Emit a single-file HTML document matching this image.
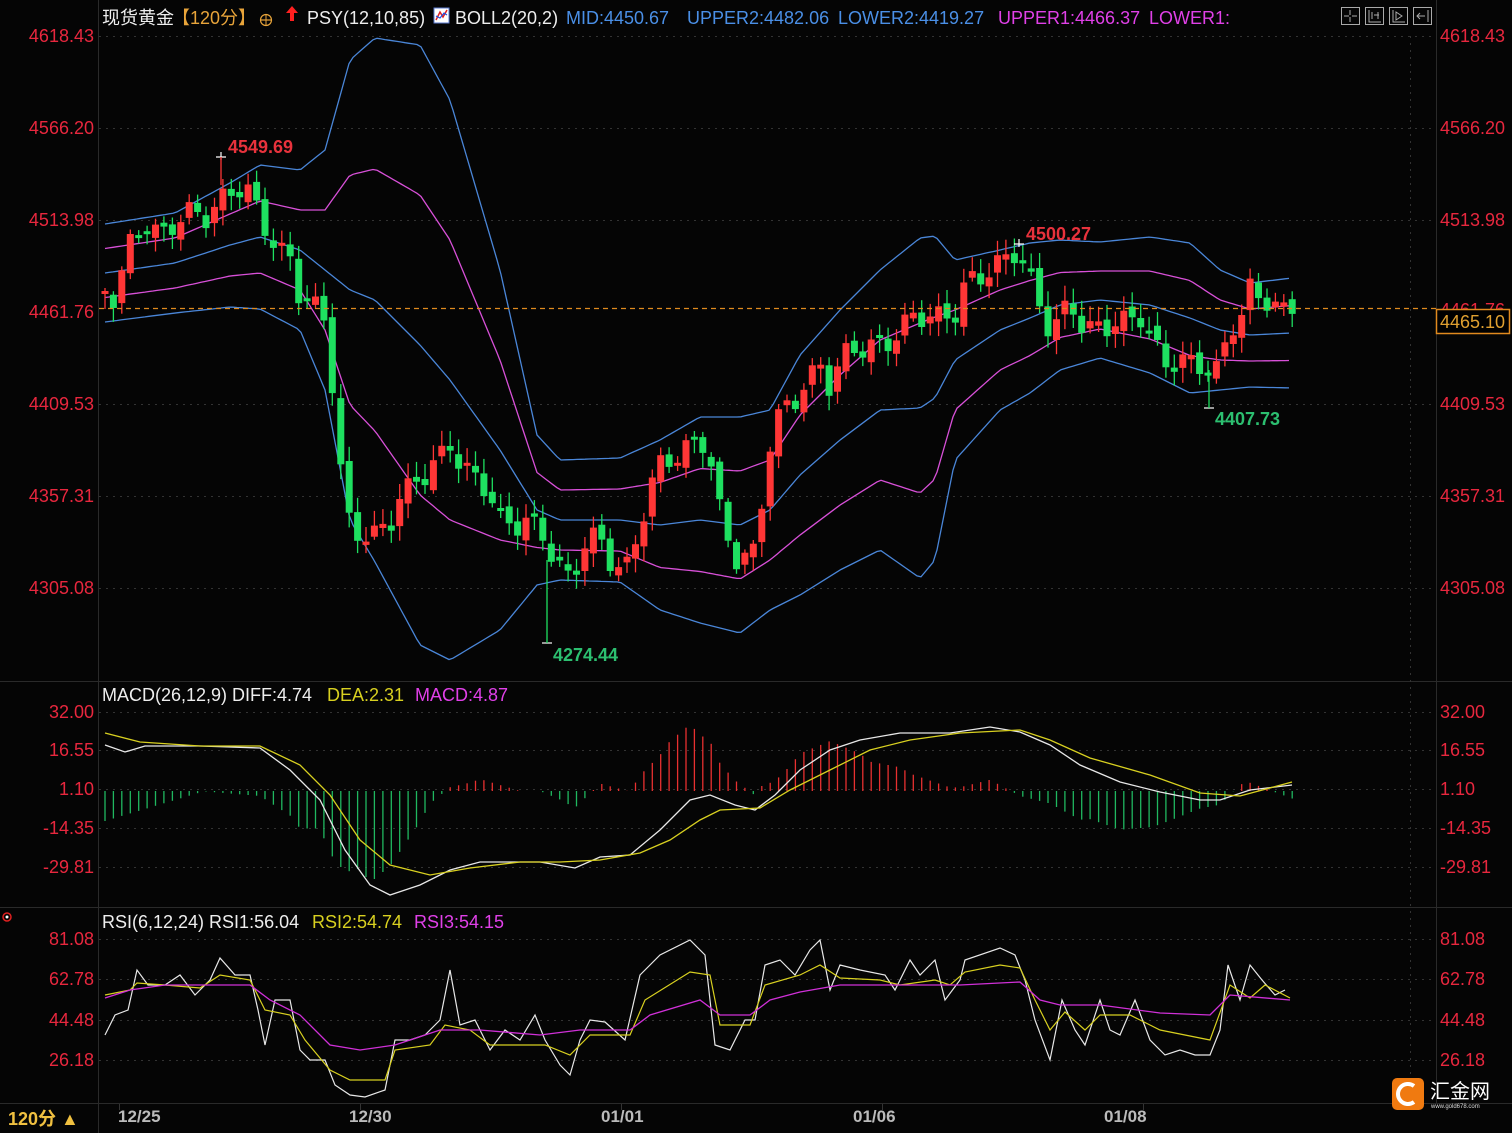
<!DOCTYPE html>
<html><head><meta charset="utf-8">
<style>
html,body{margin:0;padding:0;background:#000;}
body{width:1512px;height:1133px;overflow:hidden;position:relative;font-family:"Liberation Sans","Noto Sans CJK SC",sans-serif;}
svg{position:absolute;left:0;top:0;}
svg text{font-family:"Liberation Sans","Noto Sans CJK SC",sans-serif;}
</style></head><body>
<svg id="s" width="1512" height="1133" viewBox="0 0 1512 1133" xmlns="http://www.w3.org/2000/svg">
<rect width="1512" height="1133" fill="#050505"/>
<g stroke="#2a2a2a" stroke-width="1">
<line x1="98.5" y1="0" x2="98.5" y2="1133"/>
<line x1="1436.5" y1="0" x2="1436.5" y2="1103"/>
<line x1="0" y1="681.5" x2="1512" y2="681.5"/>
<line x1="0" y1="907.5" x2="1512" y2="907.5"/>
<line x1="0" y1="1103.5" x2="1512" y2="1103.5"/>
</g>
<g stroke="#333" stroke-width="1" stroke-dasharray="2,5">
<line x1="99" y1="36.5" x2="1436" y2="36.5"/>
<line x1="99" y1="128.5" x2="1436" y2="128.5"/>
<line x1="99" y1="220.5" x2="1436" y2="220.5"/>
<line x1="99" y1="404.5" x2="1436" y2="404.5"/>
<line x1="99" y1="496.5" x2="1436" y2="496.5"/>
<line x1="99" y1="588.5" x2="1436" y2="588.5"/>
<line x1="99" y1="712.5" x2="1436" y2="712.5"/>
<line x1="99" y1="750.5" x2="1436" y2="750.5"/>
<line x1="99" y1="789.5" x2="1436" y2="789.5"/>
<line x1="99" y1="828.5" x2="1436" y2="828.5"/>
<line x1="99" y1="867.5" x2="1436" y2="867.5"/>
<line x1="99" y1="939.5" x2="1436" y2="939.5"/>
<line x1="99" y1="979.5" x2="1436" y2="979.5"/>
<line x1="99" y1="1020.5" x2="1436" y2="1020.5"/>
<line x1="99" y1="1060.5" x2="1436" y2="1060.5"/>
<line x1="1410.5" y1="36" x2="1410.5" y2="1100"/>
</g>
<g id="dyn"></g>
<line x1="99" y1="308.5" x2="1436" y2="308.5" stroke="#e08a1e" stroke-width="1.2" stroke-dasharray="5,4"/>
<g fill="#e8273e" font-size="18" text-anchor="end">
<text x="94" y="42">4618.43</text>
<text x="94" y="134">4566.20</text>
<text x="94" y="226">4513.98</text>
<text x="94" y="318">4461.76</text>
<text x="94" y="410">4409.53</text>
<text x="94" y="502">4357.31</text>
<text x="94" y="594">4305.08</text>
<text x="94" y="718">32.00</text>
<text x="94" y="756">16.55</text>
<text x="94" y="795">1.10</text>
<text x="94" y="834">-14.35</text>
<text x="94" y="873">-29.81</text>
<text x="94" y="945">81.08</text>
<text x="94" y="985">62.78</text>
<text x="94" y="1026">44.48</text>
<text x="94" y="1066">26.18</text>
</g>
<g fill="#e8273e" font-size="18">
<text x="1440" y="42">4618.43</text>
<text x="1440" y="134">4566.20</text>
<text x="1440" y="226">4513.98</text>
<text x="1440" y="316">4461.76</text>
<text x="1440" y="410">4409.53</text>
<text x="1440" y="502">4357.31</text>
<text x="1440" y="594">4305.08</text>
<text x="1440" y="718">32.00</text>
<text x="1440" y="756">16.55</text>
<text x="1440" y="795">1.10</text>
<text x="1440" y="834">-14.35</text>
<text x="1440" y="873">-29.81</text>
<text x="1440" y="945">81.08</text>
<text x="1440" y="985">62.78</text>
<text x="1440" y="1026">44.48</text>
<text x="1440" y="1066">26.18</text>
</g>
<rect x="1436.5" y="309.5" width="73" height="24" fill="#000" stroke="#e08a1e" stroke-width="1.5"/>
<text x="1440" y="328" fill="#e0a030" font-size="18">4465.10</text>
<g font-size="18">
<text x="102" y="24" fill="#eee">现货黄金</text>
<text x="172" y="24" fill="#e8a43a">【120分】</text>
<circle cx="266" cy="20" r="5.5" fill="none" stroke="#e8a43a" stroke-width="1.2"/>
<line x1="260" y1="20" x2="272" y2="20" stroke="#e8a43a" stroke-width="1.2"/>
<line x1="266" y1="14" x2="266" y2="26" stroke="#e8a43a" stroke-width="1"/>
<path d="M292 6 L286 13 L290 13 L290 21 L294 21 L294 13 L298 13 Z" fill="#ff2020"/>
<text x="307" y="24" fill="#eee">PSY(12,10,85)</text>
<rect x="434" y="8" width="15" height="15" fill="#fff" stroke="#5a7ad0"/>
<path d="M436 20 L440 12 L443 17 L447 10" stroke="#e02020" fill="none" stroke-width="1.5"/>
<path d="M436 16 L440 18 L444 13 L447 15" stroke="#2050e0" fill="none" stroke-width="1.2"/>
<text x="455" y="24" fill="#eee">BOLL2(20,2)</text>
<text x="566" y="24" fill="#4a8fe6">MID:4450.67</text>
<text x="687" y="24" fill="#4a8fe6">UPPER2:4482.06</text>
<text x="838" y="24" fill="#4a8fe6">LOWER2:4419.27</text>
<text x="998" y="24" fill="#e040e8">UPPER1:4466.37</text>
<text x="1149" y="24" fill="#e040e8">LOWER1:</text>
</g>
<g stroke="#aaa" fill="none" stroke-width="1">
<rect x="1341.5" y="7.5" width="18" height="17"/>
<rect x="1365.5" y="7.5" width="18" height="17"/>
<rect x="1389.5" y="7.5" width="18" height="17"/>
<rect x="1413.5" y="7.5" width="18" height="17"/>
<path d="M1350 10v5M1350 17v5M1344 16h5M1352 16h5"/>
<path d="M1369 10v12h12M1372 12v7M1374 15h5M1378 12v7"/>
<path d="M1393 10v12h12M1396 12v8l6-4z"/>
<path d="M1428 10v12M1417 16h8M1420 13l-3 3 3 3"/>
</g>
<g font-size="18" font-weight="bold">
<text x="228" y="153" fill="#e8323c">4549.69</text>
<text x="1026" y="240" fill="#e8323c">4500.27</text>
<text x="553" y="661" fill="#2cbf70">4274.44</text>
<text x="1215" y="425" fill="#2cbf70">4407.73</text>
</g>
<g stroke="#fff" stroke-width="1.2">
<path d="M216 157h10M221 152v8"/><path d="M1014 244h10M1019 239v8"/>
<path d="M542 643h10"/><path d="M1204 408h10"/>
</g>
<line x1="547" y1="560" x2="547" y2="643" stroke="#1ee060" stroke-width="1.3"/>
<line x1="1209" y1="370" x2="1209" y2="408" stroke="#1ee060" stroke-width="1.3"/>
<line x1="221" y1="157" x2="221" y2="185" stroke="#ff3636" stroke-width="1.3"/>
<g font-size="18">
<text x="102" y="701" fill="#eee">MACD(26,12,9) DIFF:4.74</text>
<text x="327" y="701" fill="#d8d020">DEA:2.31</text>
<text x="415" y="701" fill="#e040e8">MACD:4.87</text>
<text x="102" y="928" fill="#eee">RSI(6,12,24) RSI1:56.04</text>
<text x="312" y="928" fill="#d8d020">RSI2:54.74</text>
<text x="414" y="928" fill="#e040e8">RSI3:54.15</text>
</g>
<circle cx="7" cy="917" r="4" fill="none" stroke="#e02020" stroke-width="1.5"/><circle cx="7" cy="917" r="1.5" fill="#fff"/>
<g font-size="17" fill="#bbb" font-weight="bold">
<text x="118" y="1122">12/25</text>
<text x="349" y="1122">12/30</text>
<text x="601" y="1122">01/01</text>
<text x="853" y="1122">01/06</text>
<text x="1104" y="1122">01/08</text>
</g>
<g stroke="#333"><line x1="119.5" y1="1104" x2="119.5" y2="1110"/><line x1="360.5" y1="1104" x2="360.5" y2="1110"/><line x1="621.5" y1="1104" x2="621.5" y2="1110"/><line x1="882.5" y1="1104" x2="882.5" y2="1110"/><line x1="1143.5" y1="1104" x2="1143.5" y2="1110"/></g>
<text x="8" y="1125" font-size="18" fill="#f0c040" font-weight="bold">120分 ▲</text>
<rect x="1392" y="1078" width="32" height="32" rx="5" fill="#f07a10"/>
<path d="M1414 1086 A10 10 0 1 0 1414 1102" stroke="#fff" stroke-width="4" fill="none"/>
<text x="1430" y="1098" font-size="20" fill="#fff">汇金网</text>
<text x="1431" y="1108" font-size="6" fill="#ddd">www.gold678.com</text>
</svg>
<script>
(function(){
var NS="http://www.w3.org/2000/svg",g=document.getElementById('dyn');
function el(t,a){var e=document.createElementNS(NS,t);for(var k in a)e.setAttribute(k,a[k]);g.appendChild(e);return e;}
function interp(pts,x){if(x<=pts[0][0])return pts[0][1];for(var i=1;i<pts.length;i++){if(x<=pts[i][0]){var a=pts[i-1],b=pts[i];return a[1]+(b[1]-a[1])*(x-a[0])/(b[0]-a[0]);}}return pts[pts.length-1][1];}
function pl(pts,c,w){el('polyline',{points:pts.map(function(p){return p.join(',')}).join(' '),fill:'none',stroke:c,'stroke-width':w||1.3});}
var B=[[105,273,49],[175,263,50],[230,245,62],[260,237,72],[300,250,80],[325,270,120],[350,290,230],[375,300,262],[420,345,300],[450,380,280],[500,450,180],[537,510,75],[560,520,60],[620,520,62],[660,525,85],[700,520,103],[740,525,108],[770,510,100],[800,475,120],[840,440,130],[880,410,140],[920,408,170],[935,398,162],[955,360,100],[1000,330,80],[1030,318,75],[1060,305,65],[1100,300,58],[1150,305,68],[1190,318,75],[1220,330,60],[1250,335,52],[1292,333,55]];
var mp=B.map(function(b){return[b[0],b[1]]}),wp=B.map(function(b){return[b[0],b[2]]});
var lines=[[-1,'#4a86d8'],[-0.5,'#d850d8'],[0,'#4a86d8'],[0.5,'#d850d8'],[1,'#4a86d8']];
lines.forEach(function(L){var pts=[];for(var x=105;x<=1292;x+=4){pts.push([x,(interp(mp,x)+L[0]*interp(wp,x)).toFixed(1)]);}pl(pts,L[1],1.3);});
var C=[[105,285],[115,295],[130,250],[145,225],[160,230],[175,220],[190,218],[205,220],[220,195],[232,188],[245,190],[262,225],[275,240],[290,255],[300,300],[312,310],[325,320],[335,400],[345,510],[360,540],[375,540],[390,520],[400,490],[410,485],[425,480],[440,460],[450,440],[462,460],[475,480],[490,500],[500,520],[515,520],[525,515],[535,530],[545,545],[555,565],[570,575],[585,540],[598,540],[610,565],[625,570],[640,520],[650,490],[660,470],[675,460],[690,440],[700,430],[712,470],[722,530],[735,560],[748,550],[758,545],[765,460],[780,420],[795,400],[805,380],[820,360],[830,390],[840,370],[850,350],[860,345],[875,340],[890,345],[900,340],[912,315],[925,310],[940,315],[955,320],[965,290],[975,275],[990,265],[1000,262],[1015,258],[1025,270],[1040,300],[1050,325],[1060,320],[1070,305],[1080,330],[1090,330],[1100,320],[1110,320],[1125,325],[1140,320],[1150,335],[1165,355],[1180,365],[1195,368],[1210,370],[1220,365],[1228,320],[1240,325],[1250,295],[1265,300],[1280,305],[1292,303]];
var prev=interp(C,105)+8;
for(var i=0;i<142;i++){var x=105+i*8.42;var c=interp(C,x)+Math.sin(i*1.7)*11+Math.cos(i*0.9)*6;var o=prev+Math.sin(i*2.3)*5;
var up=c<o,col=up?'#ff3636':'#1ee060';var top=Math.min(o,c),h=Math.max(Math.abs(o-c),3);
var wt=3+Math.abs(Math.sin(i*3.1))*12,wb=3+Math.abs(Math.cos(i*2.7))*12;
el('line',{x1:x.toFixed(1),x2:x.toFixed(1),y1:(top-wt).toFixed(1),y2:(top+h+wb).toFixed(1),stroke:col,'stroke-width':1.3});
el('rect',{x:(x-3.5).toFixed(1),y:top.toFixed(1),width:7,height:h.toFixed(1),fill:col});prev=c;}
var D=[[105,745],[125,752],[145,746],[200,746],[260,748],[290,770],[320,800],[345,850],[370,885],[390,895],[420,885],[450,870],[480,862],[540,862],[575,868],[600,857],[630,855],[660,830],[690,800],[710,795],[735,805],[755,810],[775,795],[800,770],[830,750],[860,740],[900,733],[950,733],[990,727],[1020,732],[1050,745],[1080,765],[1120,782],[1160,792],[1200,800],[1220,800],[1250,790],[1292,785]];
var E=[[105,733],[140,742],[200,746],[260,746],[300,765],[330,795],[360,840],[390,865],[430,875],[470,868],[520,862],[560,862],[600,860],[640,853],[670,840],[700,820],[720,810],[760,808],[790,790],[830,770],[870,750],[910,740],[960,733],[1020,730],[1050,740],[1090,758],[1150,775],[1200,793],[1240,796],[1292,782]];
var z=791;
for(var j=0;j<142;j++){var x=105+j*8.42;var d=interp(E,x)-interp(D,x);var h=d*2.5;if(x<200)h=-(30-(x-105)*0.3);
el('line',{x1:x.toFixed(1),x2:x.toFixed(1),y1:z,y2:(z-h).toFixed(1),stroke:h>0?'#e83030':'#20b860','stroke-width':1.3});}
pl(D,'#e8e8e8',1.3);pl(E,'#d8d020',1.3);
pl([[105,1035],[115,1015],[128,1010],[137,970],[148,985],[165,985],[180,975],[195,995],[210,980],[220,958],[235,975],[250,975],[258,1010],[265,1045],[275,1000],[290,1000],[300,1050],[310,1060],[325,1060],[335,1085],[350,1095],[365,1097],[385,1090],[395,1040],[410,1040],[425,1035],[440,1020],[450,970],[460,1025],[475,1020],[490,1050],[505,1030],[520,1040],[535,1015],[545,1040],[560,1065],[570,1075],[580,1040],[590,1020],[605,1022],[625,1040],[640,975],[660,955],[690,940],[705,955],[715,1045],[730,1050],[745,1020],[755,1020],[765,965],[780,960],[795,975],[810,950],[820,940],[830,990],[840,965],[860,970],[885,975],[895,990],[910,960],[920,975],[935,960],[945,1000],[960,980],[965,960],[1000,948],[1015,955],[1025,980],[1035,1020],[1050,1060],[1062,1000],[1075,1030],[1085,1045],[1100,1000],[1110,1030],[1120,1035],[1135,1000],[1150,1040],[1165,1055],[1180,1050],[1195,1055],[1210,1055],[1220,1030],[1228,965],[1240,1000],[1250,965],[1262,980],[1275,995],[1285,990]],'#e8e8e8',1.2);
pl([[105,995],[130,990],[137,983],[165,985],[200,988],[220,975],[250,980],[265,1010],[290,1015],[305,1040],[330,1070],[350,1080],[385,1080],[395,1050],[430,1045],[445,1025],[470,1030],[490,1045],[520,1045],[545,1045],[570,1055],[590,1035],[630,1035],[645,1000],[690,972],[710,975],[720,1025],[750,1025],[765,985],[800,975],[820,965],[840,978],[880,980],[900,985],[935,980],[950,985],[965,972],[1000,965],[1020,968],[1035,1000],[1050,1030],[1065,1012],[1085,1030],[1100,1015],[1130,1015],[1160,1030],[1210,1040],[1230,985],[1250,998],[1265,985],[1290,998]],'#d8d020',1.2);
pl([[105,998],[130,990],[165,985],[200,985],[250,985],[270,1000],[300,1015],[330,1045],[360,1050],[395,1045],[440,1030],[480,1030],[540,1035],[580,1030],[630,1030],[650,1015],[700,1000],[720,1015],[750,1015],[770,1000],[800,992],[840,985],[880,985],[960,985],[1020,982],[1040,1000],[1060,1005],[1100,1005],[1160,1013],[1210,1015],[1230,995],[1290,1000]],'#d030d8',1.3);
})();
</script>
</body></html>
